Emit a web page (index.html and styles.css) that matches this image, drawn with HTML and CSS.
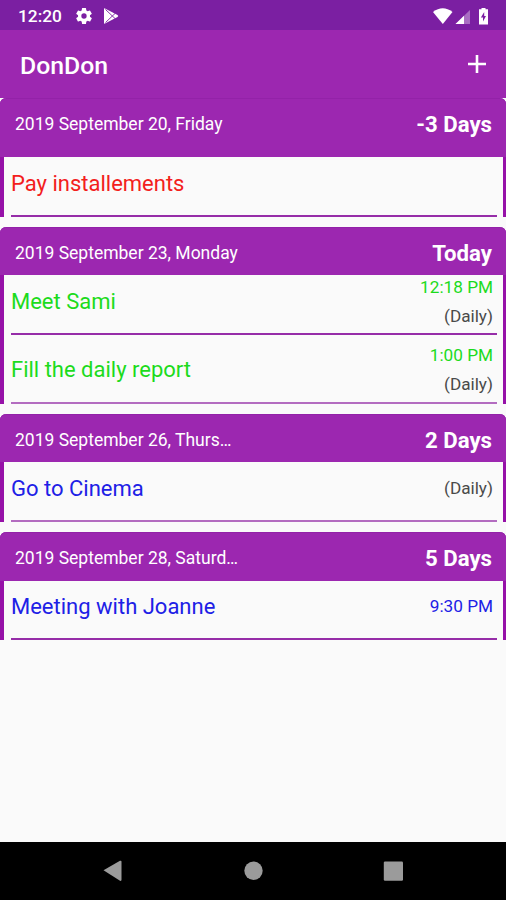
FILE: index.html
```html
<!DOCTYPE html>
<html lang="en">
<head>
<meta charset="utf-8">
<title>DonDon</title>
<link rel="stylesheet" href="styles.css">
</head>
<body>
<div class="status">
  <span class="clock">12:20</span>
  <svg class="gear" width="20" height="20" viewBox="0 0 24 24"><path fill="#fff" d="M19.14 12.94c.04-.3.06-.61.06-.94s-.02-.64-.07-.94l2.03-1.58a.49.49 0 0 0 .12-.61l-1.92-3.32a.49.49 0 0 0-.59-.22l-2.39.96a7 7 0 0 0-1.62-.94l-.36-2.54a.48.48 0 0 0-.48-.41h-3.84a.48.48 0 0 0-.47.41l-.36 2.54a7.400 7.400 0 0 0-1.620.94l-2.390-.96a.48.48 0 0 0-.59.22L2.740 8.870a.47.47 0 0 0 .12.61l2.030 1.580a7 7 0 0 0 0 1.880l-2.030 1.580a.49.49 0 0 0-.12.61l1.920 3.320c.12.22.37.29.59.22l2.390-.96c.5.38 1.030.7 1.620.94l.36 2.540c.05.24.24.41.48.41h3.840c.24 0 .44-.17.47-.41l.36-2.540a7.400 7.400 0 0 0 1.620-.94l2.390.96c.22.08.47 0 .59-.22l1.920-3.320a.47.47 0 0 0-.12-.61zM12 15.200a3.200 3.200 0 1 1 0-6.400 3.200 3.200 0 0 1 0 6.400z"/></svg>
  <svg class="play" width="16" height="16" viewBox="0 0 16 16"><path fill="#fff" d="M1 .8Q1 0 2 .4L14.500 7Q16 8 14.500 9L2 15.600Q1 16 1 15z"/><path d="M2.500 1.500 12 10.500M2.500 14.500 12 5.500" stroke="#7b1fa2" stroke-width=".9"/></svg>
  <span class="grow"></span>
  <svg class="signals" width="58" height="20" viewBox="0 0 58 20"><path fill="#fff" d="M0 6Q9.800-1.500 19.500 6L9.800 18z"/><path fill="#fff" opacity=".35" d="M37 4v14H22.500z"/><path fill="#fff" d="M31 9.800V18h-8.500z"/><path fill="#fff" d="M46 3.200h2.500V2h4v1.200H55v15.300h-9z"/><path fill="#7b1fa2" d="M51.200 6 47.900 11.500h2.100v4l3-5.500h-1.800z"/></svg>
</div>
<header class="bar">
  <h1>DonDon</h1>
  <svg width="18" height="18" viewBox="0 0 18 18"><path d="M9 0v18M0 9h18" stroke="#fff" stroke-width="2.600"/></svg>
</header>
<main>
  <section class="card first">
    <div class="head"><span class="date">2019 September 20, Friday</span><b>-3 Days</b></div>
    <div class="row red"><span class="name">Pay installements</span></div>
  </section>
  <section class="card">
    <div class="head"><span class="date">2019 September 23, Monday</span><b>Today</b></div>
    <div class="row green"><span class="name">Meet Sami</span><div class="meta"><span>12:18 PM</span><span class="rep">(Daily)</span></div></div>
    <div class="row green tall soft"><span class="name">Fill the daily report</span><div class="meta"><span>1:00 PM</span><span class="rep">(Daily)</span></div></div>
  </section>
  <section class="card">
    <div class="head"><span class="date">2019 September 26, Thurs…</span><b>2 Days</b></div>
    <div class="row blue soft"><span class="name">Go to Cinema</span><div class="meta"><span class="rep">(Daily)</span></div></div>
  </section>
  <section class="card">
    <div class="head"><span class="date">2019 September 28, Saturd…</span><b>5 Days</b></div>
    <div class="row blue"><span class="name">Meeting with Joanne</span><div class="meta"><span>9:30 PM</span></div></div>
  </section>
</main>
<nav class="nav">
  <svg width="506" height="58" viewBox="0 0 506 58"><g fill="#9b9b9b"><path d="M103.500 28.200 120 18.800q1.500-.6 1.500 1v18q0 1.600-1.500 1z"/><circle cx="253.500" cy="28.700" r="9.200"/><rect x="383.800" y="19.500" width="19.200" height="19.200" rx="1.200"/></g></svg>
</nav>
</body>
</html>
```

FILE: styles.css
```css
* { box-sizing: border-box; }
body {
  margin: 0;
  height: 900px;
  display: flex;
  flex-direction: column;
  overflow: hidden;
  background: #fafafa;
  font-family: Roboto, "Liberation Sans", sans-serif;
}
.status {
  height: 30px;
  flex: none;
  display: flex;
  align-items: center;
  padding: 1px 15px 0 18px;
  background: #7b1fa2;
  color: #fff;
}
.clock { width: 44px; font-size: 17.3px; font-weight: 500; }
.gear { margin-left: 12px; }
.play { margin-left: 9px; }
.grow { flex: 1; }
.signals { display: block; }
.bar {
  height: 68px;
  flex: none;
  display: flex;
  align-items: center;
  justify-content: space-between;
  padding: 2px 20px 0 20px;
  background: #9c27b0;
  color: #fff;
}
.bar svg { margin-top: -3px; }
h1 { margin: 0; font-size: 24.8px; font-weight: 500; }
main { flex: 1; }
.card {
  margin-bottom: 10.3px;
  border: solid #9611a8;
  border-width: 0 3px 0 4px;
  border-radius: 6px 6px 0 0;
}
.head {
  height: 48.2px;
  display: flex;
  align-items: center;
  justify-content: space-between;
  margin: 0 -3px 0 -4px;
  padding: 2px 14px 0 15px;
  border-radius: 6px 6px 0 0;
  background: #9c27b0;
  border-top: 1px solid #9322a8;
  color: #fff;
}
.first .head { height: 59px; padding-top: 1px; padding-bottom: 9px; }
.date { font-size: 17.5px; }
.head b { font-size: 22.2px; font-weight: 700; }
.row {
  height: 59.7px;
  display: flex;
  align-items: center;
  justify-content: space-between;
  margin: 0 6px 0 7px;
  padding-bottom: 5px;
  border-bottom: 2px solid #962da8;
}
.tall { height: 69px; padding-top: 8px; }
.soft { border-bottom-color: #b36cc0; }
.name { font-size: 22px; }
.meta {
  display: flex;
  flex-direction: column;
  align-items: flex-end;
  margin-right: 4px;
  font-size: 17.2px;
  line-height: 29px;
}
.rep { color: #4a4a4a; }
.red { color: #f3201c; }
.green { color: #1cdb1c; }
.blue { color: #2020e6; }
.nav { height: 58px; flex: none; background: #000; }
.nav svg { display: block; }
```
